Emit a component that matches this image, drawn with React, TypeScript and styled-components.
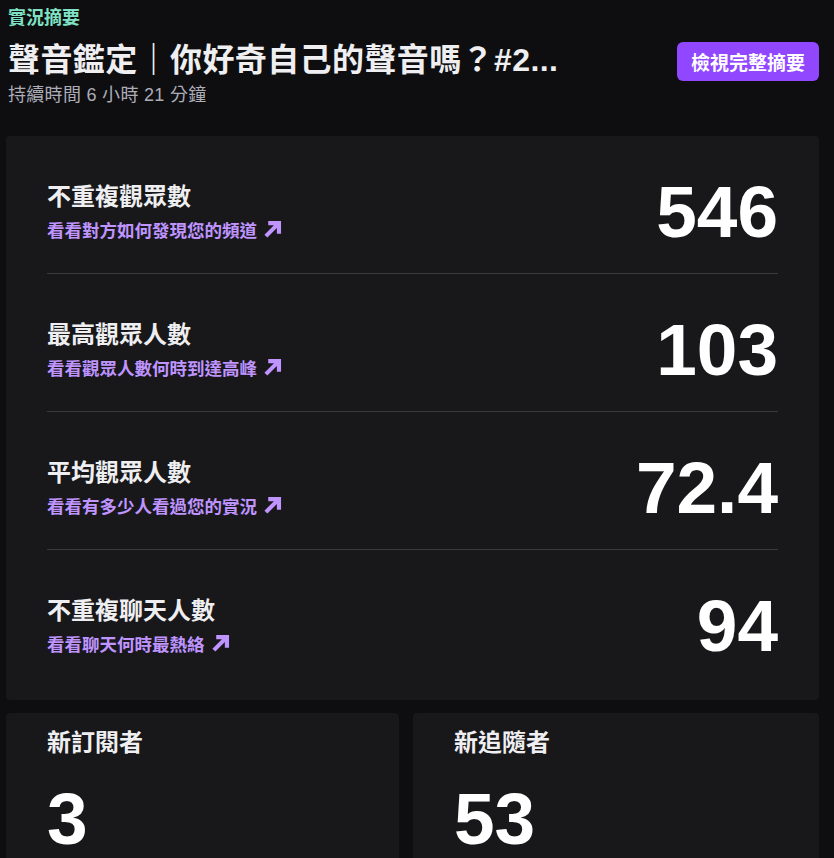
import styled, { createGlobalStyle } from 'styled-components'

const GlobalStyle = createGlobalStyle`
  html, body {
    margin: 0;
    padding: 0;
    background: #0e0e10;
  }
  body {
    font-family: 'Liberation Sans', 'Noto Sans CJK TC', sans-serif;
    color: #efeff1;
  }
`

const Page = styled.div`
  padding: 6px 15px 0 6px;
`

const Header = styled.div`
  display: flex;
  align-items: flex-start;
  justify-content: space-between;
  padding-left: 2px;
  margin-bottom: 29px;
`

const HeaderText = styled.div`
  min-width: 0;
  flex: 1;
  padding-right: 40px;
`

const Eyebrow = styled.div`
  color: #80e2c4;
  font-size: 18px;
  line-height: 24px;
  font-weight: 700;
`

const StreamTitle = styled.h1`
  margin: 7px 0 0;
  font-size: 32px;
  line-height: 46px;
  font-weight: 700;
  letter-spacing: 0.4px;
  white-space: nowrap;
  overflow: hidden;
  text-overflow: ellipsis;
`

const Duration = styled.div`
  color: #adadb8;
  font-size: 18px;
  line-height: 24px;
  letter-spacing: 0.3px;
`

const PrimaryButton = styled.button`
  margin-top: 36px;
  height: 39px;
  padding: 0 14px;
  border: none;
  border-radius: 6px;
  background: #9147ff;
  color: #fff;
  font-family: 'Liberation Sans', 'Noto Sans CJK TC', sans-serif;
  font-size: 19px;
  font-weight: 700;
  white-space: nowrap;
  cursor: pointer;
`

const StatsCard = styled.section`
  background: #18181b;
  border-radius: 4px;
  padding: 0 41px 13px;
`

const StatRow = styled.div<{ $last?: boolean }>`
  display: flex;
  align-items: center;
  justify-content: space-between;
  padding: 38px 0 23px;
  border-bottom: ${(props) => (props.$last ? 'none' : '1px solid #3a3a3d')};
`

const StatLabel = styled.div`
  display: flex;
  flex-direction: column;
  gap: 6px;
`

const StatTitle = styled.div`
  font-size: 24px;
  line-height: 32px;
  font-weight: 700;
`

const StatLink = styled.a`
  display: flex;
  align-items: center;
  gap: 6px;
  color: #bf94ff;
  font-size: 17.5px;
  line-height: 24px;
  font-weight: 700;
  text-decoration: none;
  cursor: pointer;
`

const BigNumber = styled.div`
  font-family: 'Liberation Sans', Arial, sans-serif;
  font-size: 73px;
  line-height: 76px;
  font-weight: 700;
  color: #fff;
`

const SmallCards = styled.div`
  display: grid;
  grid-template-columns: 393px 1fr;
  gap: 14px;
  margin-top: 13px;
`

const SmallCard = styled.section`
  background: #18181b;
  border-radius: 4px;
  padding: 14px 40px 30px 41px;
  display: flex;
  flex-direction: column;
  gap: 22px;
`

const ArrowIcon = () => (
  <svg width="19" height="19" viewBox="0 0 20 20" fill="#bf94ff" style={{ marginTop: -4 }}>
    <polygon points="5.5,1 19,1 19,14.5 14.6,14.5 14.6,8.5 4.6,18.5 1.5,15.4 11.5,5.4 5.5,5.4" />
  </svg>
)

const stats = [
  { title: '不重複觀眾數', link: '看看對方如何發現您的頻道', value: '546' },
  { title: '最高觀眾人數', link: '看看觀眾人數何時到達高峰', value: '103' },
  { title: '平均觀眾人數', link: '看看有多少人看過您的實況', value: '72.4' },
  { title: '不重複聊天人數', link: '看看聊天何時最熱絡', value: '94' },
]

export default function App() {
  return (
    <>
      <GlobalStyle />
      <Page>
        <Header>
          <HeaderText>
            <Eyebrow>實況摘要</Eyebrow>
            <StreamTitle>聲音鑑定｜你好奇自己的聲音嗎？#2...</StreamTitle>
            <Duration>持續時間 6 小時 21 分鐘</Duration>
          </HeaderText>
          <PrimaryButton>檢視完整摘要</PrimaryButton>
        </Header>

        <StatsCard>
          {stats.map((stat, i) => (
            <StatRow key={stat.title} $last={i === stats.length - 1}>
              <StatLabel>
                <StatTitle>{stat.title}</StatTitle>
                <StatLink>
                  {stat.link}
                  <ArrowIcon />
                </StatLink>
              </StatLabel>
              <BigNumber>{stat.value}</BigNumber>
            </StatRow>
          ))}
        </StatsCard>

        <SmallCards>
          <SmallCard>
            <StatTitle>新訂閱者</StatTitle>
            <BigNumber>3</BigNumber>
          </SmallCard>
          <SmallCard>
            <StatTitle>新追隨者</StatTitle>
            <BigNumber>53</BigNumber>
          </SmallCard>
        </SmallCards>
      </Page>
    </>
  )
}
